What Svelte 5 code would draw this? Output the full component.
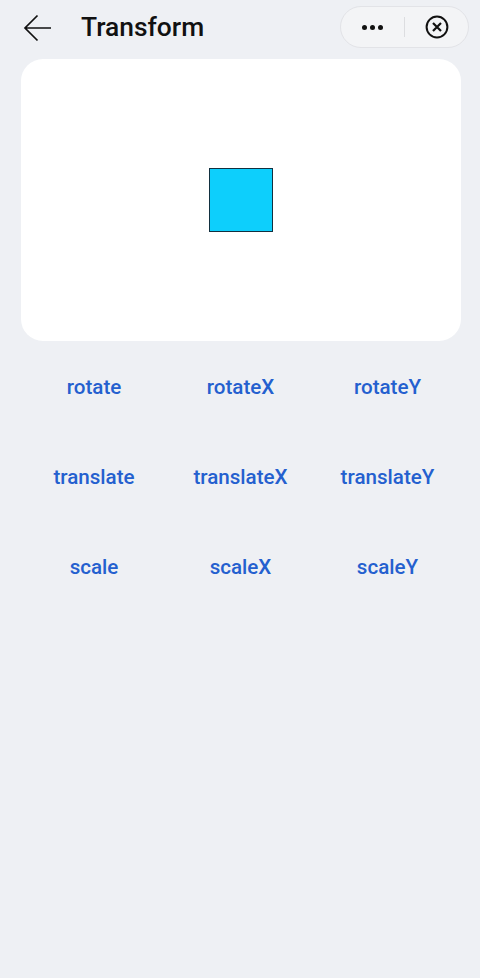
<script lang="ts">
  const actions = [
    'rotate', 'rotateX', 'rotateY',
    'translate', 'translateX', 'translateY',
    'scale', 'scaleX', 'scaleY',
  ];
</script>

<div class="page">
  <header>
    <button class="back" type="button" aria-label="Back">
      <svg width="30" height="30" viewBox="0 0 30 30" fill="none" stroke="#111" stroke-width="1.7">
        <path d="M2 15H28M14.5 2.5 2 15 14.5 27.5" />
      </svg>
    </button>
    <h1>Transform</h1>
    <div class="capsule">
      <span class="dots"><i></i><i></i><i></i></span>
      <span class="divider"></span>
      <svg width="24" height="24" viewBox="0 0 24 24" fill="none" stroke="#111">
        <circle cx="12" cy="12" r="10.4" stroke-width="2" />
        <path d="M8 8l8 8M16 8l-8 8" stroke-width="2.2" />
      </svg>
    </div>
  </header>

  <section class="stage">
    <div class="box"></div>
  </section>

  <div class="grid">
    {#each actions as action}
      <button type="button">{action}</button>
    {/each}
  </div>
</div>

<style>
  :global(body) {
    margin: 0;
    background: #eef0f4;
  }

  .page {
    height: 978px;
    padding: 0 19px 0 21px;
    box-sizing: border-box;
    background: #eef0f4;
    font-family: Roboto, "Noto Sans", sans-serif;
    overflow: hidden;
  }

  header {
    display: flex;
    align-items: center;
    height: 59px;
    margin: 0 -8px 0 0;
  }

  .back {
    display: flex;
    width: 60px;
    height: 30px;
    padding: 0 0 0 2px;
    margin-top: -3px;
    background: none;
    border: 0;
  }

  h1 {
    flex: 1;
    margin: -5px 0 0;
    font-size: 26.4px;
    font-weight: 500;
    color: #111;
  }

  .capsule {
    display: flex;
    align-items: center;
    box-sizing: border-box;
    width: 129px;
    height: 42px;
    margin-top: -5px;
    padding-left: 21px;
    border: 1px solid #e2e3e7;
    border-radius: 21px;
    background: #f3f4f6;
  }

  .dots {
    display: flex;
    gap: 3px;
  }

  .dots i {
    width: 5px;
    height: 5px;
    border-radius: 50%;
    background: #111;
  }

  .divider {
    width: 1px;
    height: 20px;
    margin: 0 20px 0 21px;
    background: #dcdde0;
  }

  .stage {
    display: flex;
    align-items: center;
    justify-content: center;
    height: 282px;
    border-radius: 22px;
    background: #fff;
  }

  .box {
    box-sizing: border-box;
    width: 64px;
    height: 64px;
    border: 1px solid #12303f;
    background: #0dcffc;
  }

  .grid {
    display: grid;
    grid-template-columns: 146px 147px 147px;
    grid-auto-rows: 90px;
    padding-top: 1px;
  }

  .grid button {
    height: 90px;
    padding: 0;
    border: 0;
    background: none;
    font: 500 20.6px Roboto, "Noto Sans", sans-serif;
    color: #2460cf;
  }
</style>
